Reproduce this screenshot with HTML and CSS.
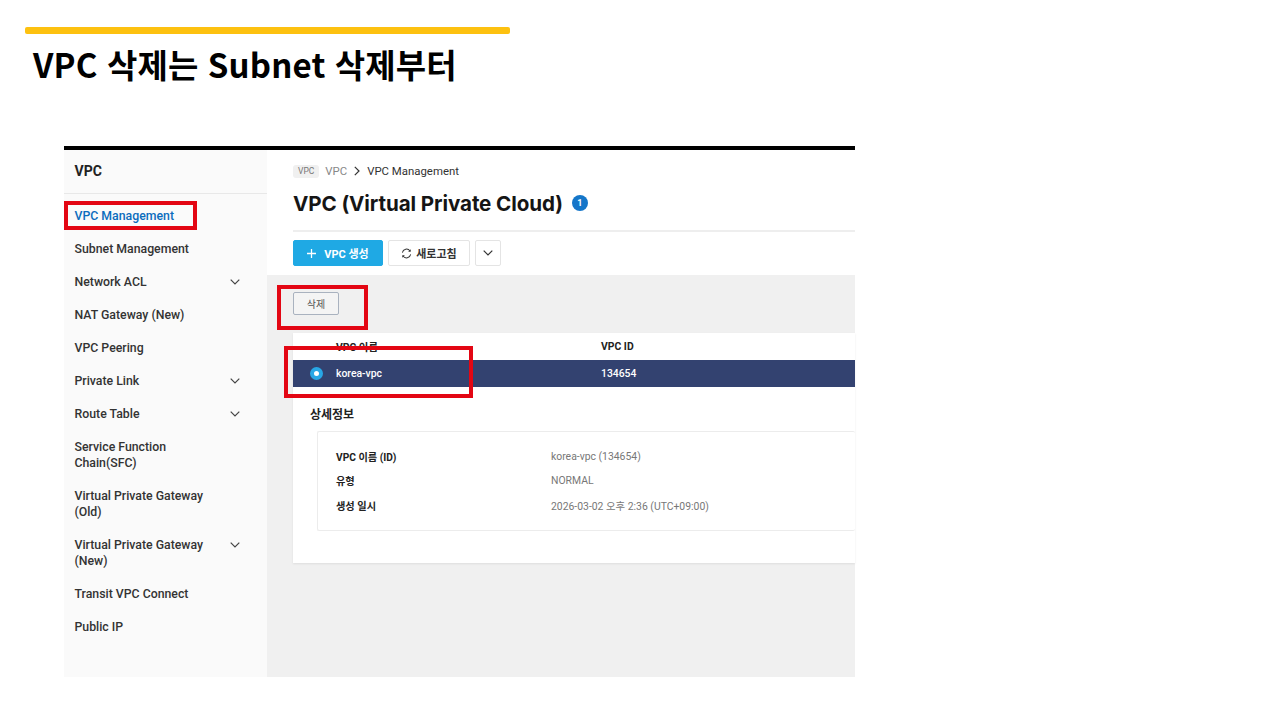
FILE: index.html
```html
<!DOCTYPE html>
<html lang="ko">
<head>
    <meta charset="UTF-8">
    <title>VPC 삭제는 Subnet 삭제부터</title>
    <link rel="stylesheet" href="styles.css">
</head>
<body>
    <div class="slide">
        <div class="accent-bar"></div>
        <h1 class="slide-title">VPC 삭제는 Subnet 삭제부터</h1>

        <div class="shot">
            <div class="sidebar">
                <div class="sidebar-title">VPC</div>
                <ul class="menu">
                    <li class="active"><span>VPC Management</span></li>
                    <li><span>Subnet Management</span></li>
                    <li><span>Network ACL</span><svg class="chev" viewBox="0 0 10 6"><path d="M0.7 0.7L5 5L9.3 0.7"/></svg></li>
                    <li><span>NAT Gateway (New)</span></li>
                    <li><span>VPC Peering</span></li>
                    <li><span>Private Link</span><svg class="chev" viewBox="0 0 10 6"><path d="M0.7 0.7L5 5L9.3 0.7"/></svg></li>
                    <li><span>Route Table</span><svg class="chev" viewBox="0 0 10 6"><path d="M0.7 0.7L5 5L9.3 0.7"/></svg></li>
                    <li><span>Service Function<br>Chain(SFC)</span></li>
                    <li><span>Virtual Private Gateway<br>(Old)</span></li>
                    <li><span>Virtual Private Gateway<br>(New)</span><svg class="chev" viewBox="0 0 10 6"><path d="M0.7 0.7L5 5L9.3 0.7"/></svg></li>
                    <li><span>Transit VPC Connect</span></li>
                    <li><span>Public IP</span></li>
                </ul>
            </div>

            <div class="content">
                <div class="head">
                    <div class="crumbs">
                        <span class="crumb-tag">VPC</span>
                        <span class="crumb-link">VPC</span>
                        <svg class="crumb-sep" viewBox="0 0 6 10"><path d="M0.8 0.8L5 5L0.8 9.2"/></svg>
                        <span>VPC Management</span>
                    </div>
                    <div class="title-row">
                        <h2>VPC (Virtual Private Cloud)</h2>
                        <span class="count">1</span>
                    </div>
                    <div class="actions">
                        <button class="btn btn-primary"><svg class="plus" viewBox="0 0 10 10"><path d="M5 0V10M0 5H10"/></svg>VPC 생성</button>
                        <button class="btn"><svg class="refresh" viewBox="0 0 12 12"><path d="M1.5 5A4.6 4.6 0 0 1 9.8 3.2M10.5 7A4.6 4.6 0 0 1 2.2 8.8"/><path class="tip" d="M10.6 1.4V4.2H7.8zM1.4 10.6V7.8H4.2z"/></svg>새로고침</button>
                        <button class="btn btn-more"><svg class="chev chev-dark" viewBox="0 0 10 6"><path d="M0.7 0.7L5 5L9.3 0.7"/></svg></button>
                    </div>
                </div>

                <div class="body">
                    <div class="toolbar">
                        <button class="btn-delete">삭제</button>
                    </div>
                    <div class="panel">
                        <div class="row row-head">
                            <div class="cell-radio"></div>
                            <div class="cell-name">VPC 이름</div>
                            <div>VPC ID</div>
                        </div>
                        <div class="row row-selected">
                            <div class="cell-radio"><span class="radio"></span></div>
                            <div class="cell-name">korea-vpc</div>
                            <div>134654</div>
                        </div>
                        <h3>상세정보</h3>
                        <div class="detail-card">
                            <div class="detail-row"><span class="detail-key">VPC 이름 (ID)</span><span>korea-vpc (134654)</span></div>
                            <div class="detail-row"><span class="detail-key">유형</span><span>NORMAL</span></div>
                            <div class="detail-row"><span class="detail-key">생성 일시</span><span>2026-03-02 오후 2:36 (UTC+09:00)</span></div>
                        </div>
                    </div>
                </div>
            </div>

            <div class="mark mark-menu"></div>
            <div class="mark mark-delete"></div>
            <div class="mark mark-row"></div>
        </div>
    </div>
</body>
</html>
```

FILE: styles.css
```css
* {
    box-sizing: border-box;
}

body {
    margin: 0;
    background-color: #fff;
    font-family: Roboto, "Noto Sans CJK KR", sans-serif;
}

.slide {
    width: 1280px;
    height: 720px;
    padding-top: 27px;
    overflow: hidden;
}

.accent-bar {
    width: 485px;
    height: 7px;
    margin-left: 25px;
    background-color: #fdc110;
    border-radius: 2px;
}

.slide-title {
    margin: 5px 0 0 33px;
    height: 50px;
    font-family: "Noto Sans CJK KR", sans-serif;
    font-size: 33px;
    font-weight: 700;
    line-height: 50px;
    letter-spacing: 0.15px;
    color: #000;
}

.shot {
    position: relative;
    display: flex;
    width: 791px;
    height: 531px;
    margin: 57px 0 0 64px;
    border-top: 4px solid #000;
}

/* sidebar */
.sidebar {
    width: 203px;
    flex-shrink: 0;
    background-color: #fafafa;
}

.sidebar-title {
    height: 44px;
    padding-left: 10.5px;
    border-bottom: 1px solid #e8e8e8;
    font-size: 14px;
    font-weight: 700;
    line-height: 43px;
    color: #222;
}

.menu {
    list-style: none;
    margin: 0;
    padding: 5px 0 0;
}

.menu li {
    display: flex;
    justify-content: space-between;
    align-items: flex-start;
    padding: 8.5px 27px 8.5px 10.5px;
    font-size: 12.3px;
    font-weight: 500;
    line-height: 16px;
    color: #333;
}

.menu li.active {
    color: #0b6cbd;
}

.chev {
    width: 10px;
    height: 6px;
    fill: none;
    stroke: #444;
    stroke-width: 1.2;
}

.menu .chev {
    margin-top: 5px;
}

/* main */
.content {
    flex: 1;
    min-width: 0;
    display: flex;
    flex-direction: column;
    background-color: #fff;
}

.head {
    height: 125px;
    padding: 11px 0 0 26px;
}

.crumbs {
    display: flex;
    align-items: center;
    height: 20px;
    font-size: 11.4px;
    color: #333;
}

.crumb-tag {
    padding: 0 5px;
    margin-right: 6px;
    background-color: #f0f0f0;
    border-radius: 3px;
    font-size: 8.5px;
    line-height: 13px;
    color: #777;
}

.crumb-link {
    color: #888;
}

.crumb-sep {
    width: 6px;
    height: 10px;
    margin: 0 7px 0 7px;
    fill: none;
    stroke: #333;
    stroke-width: 1.2;
}

.title-row {
    display: flex;
    align-items: center;
    height: 51px;
    padding-bottom: 5px;
    border-bottom: 2px solid #eee;
}

.title-row h2 {
    margin: 0;
    font-family: Inter, sans-serif;
    font-size: 20.6px;
    font-weight: 700;
    letter-spacing: -0.1px;
    color: #151515;
}

.count {
    width: 16px;
    height: 16px;
    margin-left: 9px;
    background-color: #1576c9;
    border-radius: 50%;
    font-size: 9px;
    font-weight: 700;
    line-height: 16px;
    text-align: center;
    color: #fff;
}

.actions {
    display: flex;
    gap: 5px;
    margin-top: 8px;
}

.btn {
    display: flex;
    align-items: center;
    justify-content: center;
    height: 26px;
    width: 82px;
    padding: 0;
    background-color: #fff;
    border: 1px solid #e4e4e4;
    border-radius: 2px;
    font-family: inherit;
    font-size: 11px;
    font-weight: 700;
    color: #333;
}

.btn-primary {
    width: 90px;
    background-color: #1fa9e4;
    border-color: #1fa9e4;
    color: #fff;
}

.btn-more {
    width: 26px;
}

.chev-dark {
    stroke: #333;
}

.plus {
    width: 9px;
    height: 9px;
    margin-right: 8px;
    fill: none;
    stroke: #fff;
    stroke-width: 1.4;
}

.refresh {
    width: 11px;
    height: 11px;
    margin-right: 4px;
    fill: none;
    stroke: #333;
    stroke-width: 1.1;
}

.refresh .tip {
    fill: #333;
    stroke: none;
}

.body {
    flex: 1;
    padding-left: 26px;
    background-color: #f0f0f0;
}

.toolbar {
    height: 58px;
    padding-top: 17px;
}

.btn-delete {
    display: block;
    width: 46px;
    height: 23px;
    padding: 0;
    background-color: #f4f4f4;
    border: 1px solid #a9b2bf;
    border-radius: 2px;
    font-family: inherit;
    font-size: 10px;
    color: #555;
}

.panel {
    height: 230px;
    background-color: #fff;
    box-shadow: 0 1px 2px rgba(0, 0, 0, 0.08);
}

.row {
    display: flex;
    align-items: center;
    height: 27px;
    padding-bottom: 1px;
    font-size: 10.4px;
    font-weight: 500;
}

.row-head {
    font-weight: 700;
    color: #222;
}

.row-selected {
    background-color: #334270;
    color: #fff;
}

.cell-radio {
    display: flex;
    justify-content: center;
    width: 43px;
    padding-left: 4px;
}

.cell-name {
    width: 265px;
}

.radio {
    width: 13px;
    height: 13px;
    background-color: #fff;
    border: 4px solid #28a7e6;
    border-radius: 50%;
}

.panel h3 {
    margin: 0;
    padding: 17px 0 0 17px;
    height: 44px;
    font-size: 12px;
    font-weight: 700;
    line-height: 23px;
    color: #222;
}

.detail-card {
    margin-left: 24px;
    height: 100px;
    padding: 12px 0 0 18px;
    border: 1px solid #ececec;
    border-right: none;
    border-radius: 2px;
}

.detail-row {
    display: flex;
    align-items: center;
    height: 24.5px;
    font-size: 10.4px;
    color: #777;
}

.detail-key {
    width: 215px;
    font-size: 10.2px;
    font-weight: 700;
    color: #222;
}

/* red callouts drawn over the capture */
.mark {
    position: absolute;
    border: 4px solid #e30613;
}

.mark-menu {
    left: 0;
    top: 51px;
    width: 133px;
    height: 29px;
}

.mark-delete {
    left: 213px;
    top: 135px;
    width: 91px;
    height: 45px;
}

.mark-row {
    left: 220px;
    top: 196px;
    width: 189px;
    height: 52px;
}
```
